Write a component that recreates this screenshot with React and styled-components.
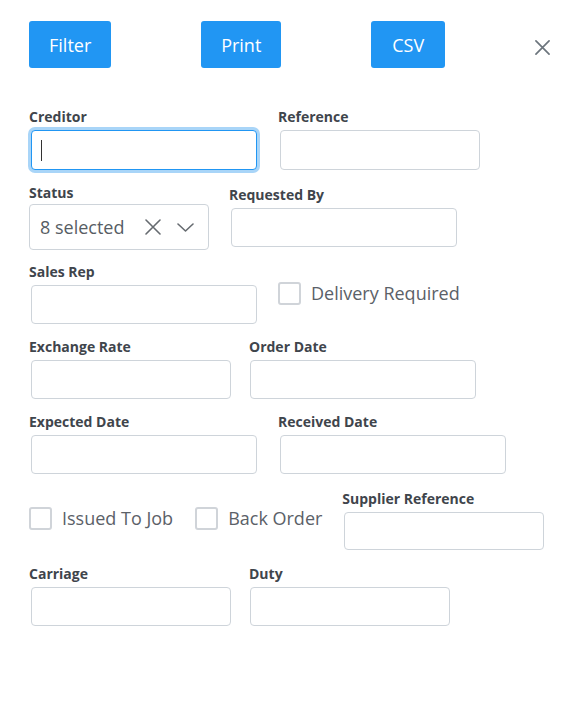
import React from "react";
import styled, { createGlobalStyle } from "styled-components";

const GlobalStyle = createGlobalStyle`
  body {
    margin: 0;
    background: #fff;
    font-family: "Open Sans", "Noto Sans", Arial, sans-serif;
  }
`;

const Page = styled.div`
  width: 576px;
  min-height: 706px;
  box-sizing: border-box;
  padding: 21px 26px 0 29px;
`;

const Toolbar = styled.div`
  display: flex;
  justify-content: space-between;
  align-items: flex-start;
`;

const Button = styled.button`
  height: 47px;
  padding: 0 ${(p) => p.$px || 20}px;
  border: none;
  border-radius: 3px;
  background: #2196f3;
  color: #fff;
  font-family: inherit;
  font-size: 18px;
  cursor: pointer;
`;

const CloseButton = styled.button`
  margin-top: 19px;
  padding: 0;
  border: none;
  background: none;
  width: 15px;
  height: 15px;
  display: flex;
  color: #6c757d;
  cursor: pointer;
`;

const Row = styled.div`
  display: flex;
  align-items: flex-start;
  gap: ${(p) => p.$gap}px;
  margin-top: ${(p) => p.$mt}px;
`;

const FieldBox = styled.div`
  display: flex;
  flex-direction: column;
  align-items: flex-start;
  margin-top: ${(p) => p.$mt || 0}px;
  margin-left: ${(p) => p.$ml || 0}px;
`;

const Label = styled.label`
  display: block;
  font-size: 14px;
  font-weight: 700;
  line-height: 20px;
  color: #3f454c;
`;

const TextInput = styled.input`
  display: block;
  box-sizing: border-box;
  width: ${(p) => p.$w}px;
  height: ${(p) => p.$h || 39}px;
  margin: 3px 0 0 ${(p) => p.$inset ?? 2}px;
  padding: 0 10px;
  border: 1px solid #ced4da;
  border-radius: 4px;
  font-family: inherit;
  font-size: 18px;
  color: #495057;
  outline: none;
  caret-color: transparent;
  background: #fff;
`;

const FocusWrap = styled.div`
  position: relative;
  margin: 3px 0 0 2px;

  ${TextInput} {
    margin: 0;
    border-color: #2196f3;
    box-shadow: 0 0 0 3px #a9d5f8;
  }
`;

const Caret = styled.span`
  position: absolute;
  left: 10px;
  top: 10px;
  width: 1px;
  height: 21px;
  background: #333;
`;

const Select = styled.div`
  box-sizing: border-box;
  display: flex;
  align-items: center;
  width: 180px;
  height: 46px;
  margin-top: 1px;
  padding: 0 14px 0 10px;
  border: 1px solid #ced4da;
  border-radius: 4px;
  color: #575d64;
  font-size: 18px;
`;

const SelectValue = styled.span`
  flex: 1;
`;

const IconSlot = styled.span`
  display: flex;
  margin-right: ${(p) => p.$mr || 0}px;
  color: #666b70;
`;

const Check = styled.label`
  display: flex;
  align-items: center;
  gap: 10px;
  margin-top: ${(p) => p.$mt}px;
  font-size: 18px;
  line-height: 23px;
  color: #5b6168;
  white-space: nowrap;
`;

const Box = styled.span`
  box-sizing: border-box;
  width: 23px;
  height: 23px;
  border: 2px solid #d0d4d9;
  border-radius: 3px;
  background: #fff;
`;

const XIcon = ({ size = 16, stroke = 1.6 }) => (
  <svg width={size} height={size} viewBox="0 0 16 16" fill="none">
    <path
      d="M1 1L15 15M15 1L1 15"
      stroke="currentColor"
      strokeWidth={stroke}
      strokeLinecap="round"
    />
  </svg>
);

const Chevron = () => (
  <svg width="17" height="9" viewBox="0 0 17 9" fill="none">
    <path
      d="M1 1L8.5 8L16 1"
      stroke="currentColor"
      strokeWidth="1.6"
      strokeLinecap="round"
      strokeLinejoin="round"
    />
  </svg>
);

const Field = ({ label, w, h, mt, ml, inset }) => (
  <FieldBox $mt={mt} $ml={ml}>
    <Label>{label}</Label>
    <TextInput $w={w} $h={h} $inset={inset} />
  </FieldBox>
);

const CheckField = ({ label, mt }) => (
  <Check $mt={mt}>
    <Box />
    {label}
  </Check>
);

const App = () => {
  return (
    <Page>
      <GlobalStyle />
      <Toolbar>
        <Button>Filter</Button>
        <Button>Print</Button>
        <Button $px={21}>CSV</Button>
        <CloseButton aria-label="Close">
          <XIcon size={15} stroke={1.8} />
        </CloseButton>
      </Toolbar>

      <Row $mt={39} $gap={21}>
        <FieldBox>
          <Label>Creditor</Label>
          <FocusWrap>
            <TextInput $w={226} $h={40} />
            <Caret />
          </FocusWrap>
        </FieldBox>
        <Field label="Reference" w={200} h={40} />
      </Row>

      <Row $mt={13} $gap={20}>
        <FieldBox>
          <Label>Status</Label>
          <Select>
            <SelectValue>8 selected</SelectValue>
            <IconSlot $mr={16}>
              <XIcon />
            </IconSlot>
            <IconSlot>
              <Chevron />
            </IconSlot>
          </Select>
        </FieldBox>
        <Field label="Requested By" w={226} h={39} mt={2} />
      </Row>

      <Row $mt={12} $gap={21}>
        <Field label="Sales Rep" w={226} h={39} />
        <CheckField label="Delivery Required" mt={20} />
      </Row>

      <Row $mt={13} $gap={18}>
        <Field label="Exchange Rate" w={200} />
        <Field label="Order Date" w={226} inset={1} />
      </Row>

      <Row $mt={13} $gap={21}>
        <Field label="Expected Date" w={226} />
        <Field label="Received Date" w={226} />
      </Row>

      <Row $mt={15} $gap={22}>
        <CheckField label="Issued To Job" mt={18} />
        <CheckField label="Back Order" mt={18} />
        <Field label="Supplier Reference" w={200} h={38} ml={-2} />
      </Row>

      <Row $mt={14} $gap={18}>
        <Field label="Carriage" w={200} />
        <Field label="Duty" w={200} inset={1} />
      </Row>
    </Page>
  );
};

export default App;
